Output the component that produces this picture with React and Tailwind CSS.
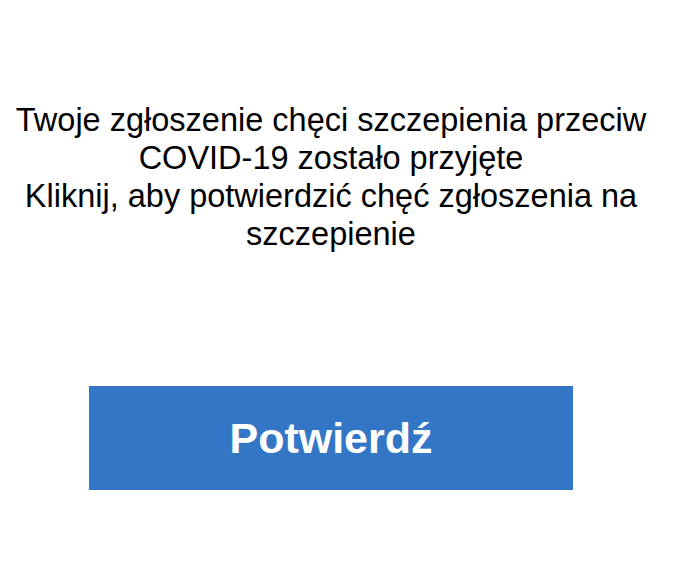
export default function App() {
  return (
    <div className="bg-white w-[684px] h-[570px] flex flex-col items-start pt-[101px] font-['Liberation_Sans',Arial,sans-serif]">
      <div className="w-[662px] flex flex-col items-center">
        <div className="w-[656px] text-center text-black text-[32.5px] leading-[38px]">
          <p>Twoje zgłoszenie chęci szczepienia przeciw COVID-19 zostało przyjęte</p>
          <p>Kliknij, aby potwierdzić chęć zgłoszenia na szczepienie</p>
        </div>
        <button className="mt-[133px] w-[484px] h-[104px] bg-[#3476c6] text-white font-bold text-[43px] flex items-center justify-center">
          Potwierdź
        </button>
      </div>
    </div>
  );
}
